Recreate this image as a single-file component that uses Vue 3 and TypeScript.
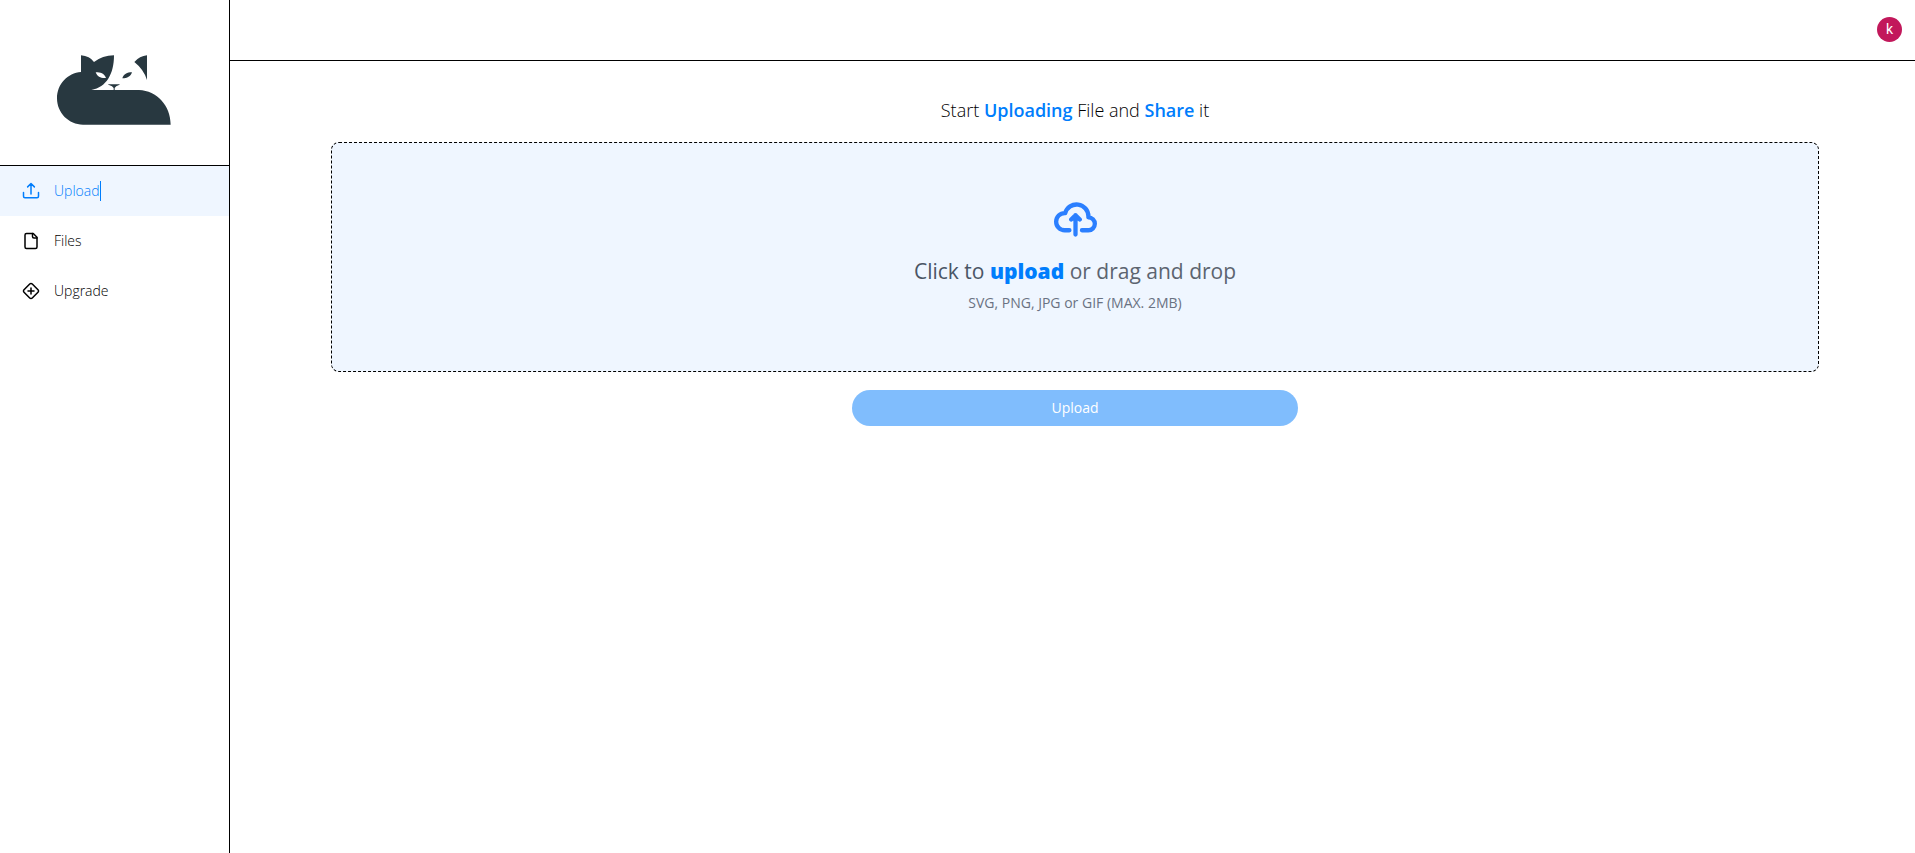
<script setup lang="ts">
import { ref } from 'vue'

interface NavItem {
  id: 'upload' | 'files' | 'upgrade'
  label: string
}

const items: NavItem[] = [
  { id: 'upload', label: 'Upload' },
  { id: 'files', label: 'Files' },
  { id: 'upgrade', label: 'Upgrade' },
]

const active = ref<NavItem['id']>('upload')
const file = ref<File | null>(null)

function pick(event: Event): void {
  file.value = (event.target as HTMLInputElement).files?.[0] ?? null
}

function drop(event: DragEvent): void {
  file.value = event.dataTransfer?.files?.[0] ?? null
}
</script>

<template>
  <div class="layout">
    <aside class="sidebar">
      <div class="brand">
        <svg class="logo" viewBox="52 44 342 210" role="img" aria-label="Cat logo">
          <path
            fill="#283840"
            fill-rule="evenodd"
            d="M124 45Q150 47 163 65Q188 46 223 45C223 100 201 141 155 149H298C352 151 393 196 393 253H130C87 253 52 218 52 174C52 131 84 98 124 95ZM168 96C174 110 183 114 199 113C193 99 183 96 168 96Z"
          />
          <path
            fill="#283840"
            d="M322 45V119Q312 87 284 65Q300 47 322 45ZM277 96C262 96 252 101 248 114C263 114 273 109 277 96ZM204 132H241L238 134Q228 137 225 143V150H222V143Q219 137 208 134Z"
          />
        </svg>
      </div>
      <nav class="nav" aria-label="Main">
        <a
          v-for="item in items"
          :key="item.id"
          href="#"
          class="nav-item"
          :class="{ active: active === item.id }"
          :aria-current="active === item.id ? 'page' : undefined"
          @click.prevent="active = item.id"
        >
          <svg class="nav-icon" viewBox="0 0 24 24" aria-hidden="true">
            <template v-if="item.id === 'upload'">
              <path d="M22 14v5a2 2 0 0 1-2 2H4a2 2 0 0 1-2-2v-5" />
              <path d="M16.500 6.500L12 2L7.500 6.500M12 2v14" />
            </template>
            <template v-else-if="item.id === 'files'">
              <path d="M15 2H6a2 2 0 0 0-2 2v16a2 2 0 0 0 2 2h12a2 2 0 0 0 2-2V7Z" />
              <path d="M14 2v4a2 2 0 0 0 2 2h4" />
            </template>
            <template v-else>
              <path d="M2.7 10.3a2.41 2.41 0 0 0 0 3.41l7.59 7.59a2.41 2.41 0 0 0 3.41 0l7.59-7.59a2.41 2.41 0 0 0 0-3.41L13.7 2.71a2.41 2.41 0 0 0-3.41 0Z" />
              <path d="M12 8v8M8 12h8" />
            </template>
          </svg>
          <span class="nav-label">{{ item.label }}</span>
        </a>
      </nav>
    </aside>

    <div class="content">
      <header class="topbar">
        <button class="avatar" type="button" aria-label="Account">k</button>
      </header>
      <main class="main">
        <h1 class="title">Start <strong>Uploading</strong> File and <strong>Share</strong> it</h1>
        <form class="form" @submit.prevent>
          <label class="dropzone" for="file-input" @dragover.prevent @drop.prevent="drop">
            <svg class="cloud" viewBox="0 0 20 16" aria-hidden="true">
              <path d="M13 13h3a3 3 0 0 0 0-6h-.025A5.56 5.56 0 0 0 16 6.5 5.5 5.5 0 0 0 5.207 5.021C5.137 5.017 5.071 5 5 5a4 4 0 0 0 0 8h2.167M10 15V6m0 0L8 8m2-2 2 2" />
            </svg>
            <span class="prompt"><span class="click">Click to <strong>upload</strong></span> or drag and drop</span>
            <span class="hint">SVG, PNG, JPG or GIF (MAX. 2MB)</span>
            <input id="file-input" class="file-input" type="file" @change="pick" />
          </label>
          <button class="submit" type="submit" :disabled="!file">Upload</button>
        </form>
      </main>
    </div>
  </div>
</template>

<style>
body {
  margin: 0;
  background: #fff;
}
</style>

<style scoped>
.layout {
  display: flex;
  min-height: 100vh;
  color: #000;
  font-family: "Segoe UI", "Open Sans", "Noto Sans", sans-serif;
}

.sidebar {
  box-sizing: border-box;
  flex: 0 0 230px;
  border-right: 1px solid #000;
}

.brand {
  display: flex;
  padding: 55px 57px 40px;
  border-bottom: 1px solid #000;
}

.logo {
  width: 114px;
  height: 70px;
}

.nav {
  display: flex;
  flex-direction: column;
}

.nav-item {
  display: flex;
  align-items: center;
  gap: 14px;
  padding: 15px 22px;
  color: #000;
  font-size: 14px;
  line-height: 20px;
  font-weight: 350;
  text-decoration: none;
}

.nav-icon {
  width: 18px;
  height: 18px;
  fill: none;
  stroke: currentColor;
  stroke-width: 2;
  stroke-linecap: round;
  stroke-linejoin: round;
}

.nav-item.active {
  background: #eff6ff;
  color: #007dfc;
}

.active .nav-label {
  border-right: 1px solid currentColor;
}

.content {
  flex: 1;
  min-width: 0;
}

.topbar {
  display: flex;
  justify-content: flex-end;
  padding: 17px 13px 18px;
  border-bottom: 1px solid #000;
}

.avatar {
  width: 25px;
  height: 25px;
  padding: 0;
  border: 0;
  border-radius: 50%;
  background: #c2185b;
  color: #fff;
  font: 400 14px/25px Roboto, sans-serif;
}

.main {
  padding: 36px 96px 36px 101px;
}

.title {
  margin: 0 0 18px;
  font-size: 18px;
  line-height: 27px;
  font-weight: 300;
  text-align: center;
}

.title strong {
  color: #007dfc;
  font-weight: 600;
}

.form {
  display: flex;
  flex-direction: column;
  align-items: center;
  gap: 18px;
}

.dropzone {
  position: relative;
  box-sizing: border-box;
  display: flex;
  flex-direction: column;
  align-items: center;
  width: 100%;
  padding: 59px 16px 58px;
  border: 1px dashed #000;
  border-radius: 8px;
  background: #eff6ff;
  cursor: pointer;
}

.cloud {
  width: 43px;
  height: 35px;
  margin-bottom: 20px;
  fill: none;
  stroke: #2b7fff;
  stroke-width: 2;
  stroke-linecap: round;
  stroke-linejoin: round;
}

.prompt {
  margin-bottom: 8px;
  color: #5c6470;
  font-size: 21px;
  line-height: 28px;
}

.click {
  color: #4a5565;
  font-weight: 500;
}

.click strong {
  color: #007dfc;
  font-weight: 800;
}

.hint {
  color: #6a7282;
  font-size: 14px;
  line-height: 20px;
}

.file-input {
  position: absolute;
  width: 1px;
  height: 1px;
  opacity: 0;
}

.submit {
  width: 30%;
  padding: 8px 16px;
  border: 0;
  border-radius: 18px;
  background: #007dfc;
  color: #fff;
  font: inherit;
  font-size: 14px;
  line-height: 20px;
  font-weight: 500;
}

.submit:disabled {
  background: #80bdfd;
}
</style>
